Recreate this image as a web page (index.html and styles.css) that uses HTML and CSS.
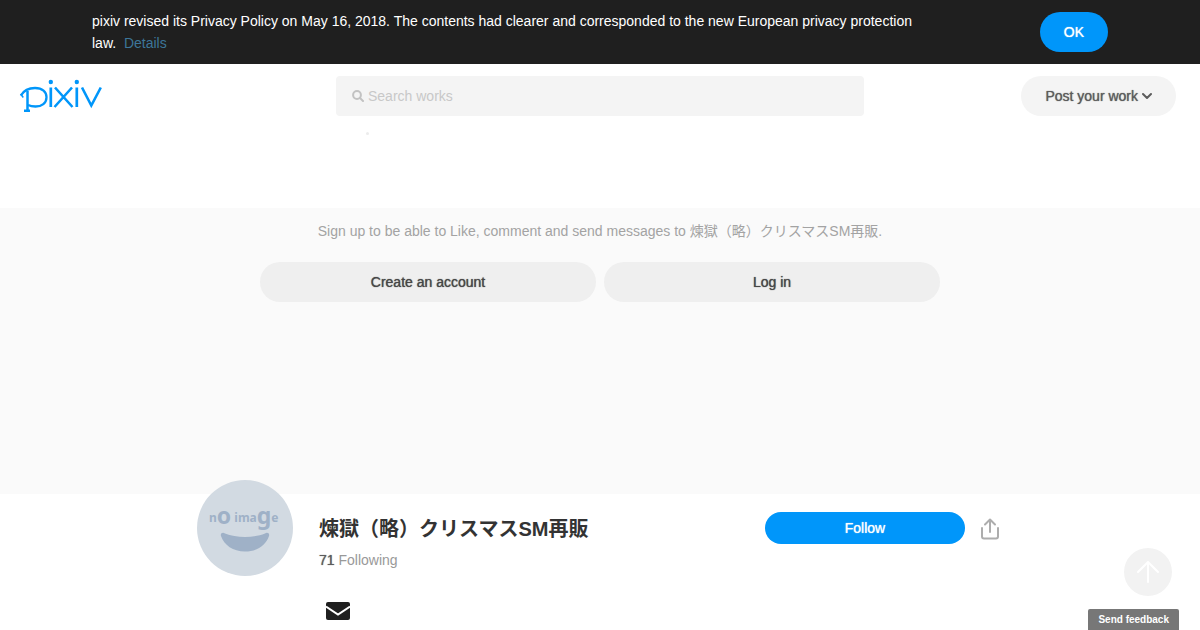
FILE: index.html
```html
<!DOCTYPE html>
<html lang="en">
<head>
<meta charset="utf-8">
<title>煉獄（略）クリスマスSM再販 - pixiv</title>
<meta name="viewport" content="width=device-width, initial-scale=1">
<link rel="stylesheet" href="styles.css">
</head>
<body>
<aside class="notice">
  <div class="notice-inner">
    <p class="notice-text">pixiv revised its Privacy Policy on May 16, 2018. The contents had clearer and corresponded to the new European privacy protection law.&nbsp; <a class="notice-link" href="#">Details</a></p>
    <button class="button button-primary" type="button">OK</button>
  </div>
</aside>

<header class="header">
  <a class="logo" href="#" aria-label="pixiv">
    <svg width="84" height="34" viewBox="0 0 84 34" fill="none" stroke="#0096fa">
      <path d="M.8 16.500C3.500 12 8.500 9 15 9c7.500 0 11.500 4 11.500 9.200 0 5.800-4.800 9.300-11 9.300-3 0-5.500-.5-7.500-1.500" stroke-width="2.300"/>
      <path d="M.7 15l2.600 3.500" stroke-width="1.500"/>
      <path d="M7.500 12v19.500M4 31.800h6" stroke-width="2.500"/>
      <path d="M30.800 8.500v19.500M56.800 8.500v19.500" stroke-width="2.700"/>
      <path d="M35 8.500l17.500 19.500M52 8.500l-17.500 19.500M62 8.500l9.300 18 9.500-18" stroke-width="2.600"/>
      <circle cx="30.800" cy="3" r="2.200" fill="#0096fa" stroke="none"/>
      <circle cx="56.800" cy="3" r="2.200" fill="#0096fa" stroke="none"/>
    </svg>
  </a>
  <form class="search">
    <svg width="12" height="12" viewBox="0 0 12 12" fill="none" stroke="#c2c2c2" stroke-width="2" stroke-linecap="round"><circle cx="5" cy="5" r="3.900"/><path d="M8 8l3 3"/></svg>
    <input class="search-input" type="text" placeholder="Search works" aria-label="Search works">
    <span class="search-dot"></span>
  </form>
  <div class="header-side">
    <button class="button button-post" type="button">Post your work
      <svg width="10" height="8" viewBox="0 0 10 8" fill="none" stroke="#5c5c5c" stroke-width="2" stroke-linecap="round" stroke-linejoin="round"><path d="M1 2l4 4 4-4"/></svg>
    </button>
  </div>
</header>

<main>
  <section class="signup">
    <p class="signup-text">Sign up to be able to Like, comment and send messages to 煉獄（略）クリスマスSM再販.</p>
    <div class="signup-actions">
      <button class="button button-soft" type="button">Create an account</button>
      <button class="button button-soft" type="button">Log in</button>
    </div>
  </section>

  <section class="profile">
    <svg class="avatar" width="96" height="96" viewBox="0 0 96 96" role="img" aria-label="no image">
      <circle cx="48" cy="48" r="48" fill="#d2dae2"/>
      <text class="avatar-text" x="12" y="42" fill="#9fb1c7">n<tspan class="avatar-large" dy="2">o</tspan><tspan dy="-2"> ima</tspan><tspan class="avatar-large" dy="2">g</tspan><tspan dy="-2">e</tspan></text>
      <path d="M24 56c-1-3 2-4 4-2.500 11 4.500 29 4.500 40 0 2-1.500 5-.5 4 2.500-3 9-12 15.500-24 15.500S27 65 24 56z" fill="#9fb1c7"/>
    </svg>
    <div class="profile-info">
      <h1 class="profile-name">煉獄（略）クリスマスSM再販</h1>
      <p class="following"><span class="following-count">71</span> Following</p>
      <a class="mail" href="#" aria-label="Email">
        <svg width="24" height="18" viewBox="0 0 24 18"><rect width="24" height="18" rx="2" fill="#1f1f1f"/><path d="M0 4.500l12 8 12-8" fill="none" stroke="#fff" stroke-width="2"/></svg>
      </a>
    </div>
    <div class="profile-actions">
      <button class="button button-primary button-follow" type="button">Follow</button>
      <button class="share" type="button" aria-label="Share">
        <svg width="20" height="22" viewBox="0 0 20 22" fill="none" stroke="#adadad" stroke-width="2"><path d="M2 10v8.500a2 2 0 0 0 2 2h12a2 2 0 0 0 2-2V10M10 14V2M5 6.500l5-5 5 5" stroke-linecap="round" stroke-linejoin="round"/></svg>
      </button>
    </div>
  </section>
</main>

<button class="to-top" type="button" aria-label="Back to top">
  <svg width="24" height="24" viewBox="0 0 24 24" fill="none" stroke="#fff" stroke-width="2" stroke-linecap="round" stroke-linejoin="round"><path d="M12 22V2M2 12L12 2l10 10"/></svg>
</button>
<button class="feedback" type="button">Send feedback</button>
</body>
</html>
```
FILE: styles.css
```css
* { box-sizing: border-box; }

body {
  margin: 0;
  background: #fff;
  color: #333;
  font: 14px/22px "Liberation Sans", "Noto Sans CJK JP", sans-serif;
}

p, h1 { margin: 0; }

svg { display: block; flex: none; }

button, input { font: inherit; }

.button {
  display: inline-flex;
  align-items: center;
  justify-content: center;
  gap: 4px;
  height: 40px;
  padding: 0 24px;
  border: 0;
  border-radius: 20px;
  text-shadow: 0 0 1px currentColor;
  cursor: pointer;
}

.button-primary { background: #0096fa; color: #fff; }
.button-post { background: #f4f4f4; color: #5c5c5c; }
.button-soft { flex: 1; background: #efefef; color: #474747; }

.notice { background: #1f1f1f; color: #fff; }

.notice-inner {
  display: flex;
  align-items: center;
  justify-content: space-between;
  gap: 64px;
  max-width: 1016px;
  min-height: 64px;
  margin: 0 auto;
}

.notice-text { max-width: 840px; }
.notice-link { color: #3d7699; text-decoration: none; }

.header {
  display: grid;
  grid-template-columns: 1fr minmax(0, 528px) 1fr;
  align-items: center;
  height: 64px;
  margin-bottom: 80px;
  padding: 0 24px;
}

.logo { justify-self: start; margin-left: -4px; }
.logo svg { overflow: visible; }

.search {
  position: relative;
  display: flex;
  align-items: center;
  gap: 4px;
  height: 40px;
  padding: 0 16px;
  border-radius: 4px;
  background: #f4f4f4;
}

.search-input {
  flex: 1;
  min-width: 0;
  padding: 0;
  border: 0;
  outline: 0;
  background: transparent;
}

.search-input::placeholder { color: #c8c8c8; }

.search-dot {
  position: absolute;
  top: 56px;
  left: 30px;
  width: 3px;
  height: 3px;
  border-radius: 50%;
  background: #ececec;
}

.header-side { justify-self: end; }

.signup {
  min-height: 286px;
  padding: 12px 16px;
  background: #fafafa;
  text-align: center;
}

.signup-text { margin-bottom: 20px; color: #a3a3a3; }

.signup-actions {
  display: flex;
  gap: 8px;
  max-width: 680px;
  margin: 0 auto;
}

.profile {
  display: flex;
  align-items: flex-start;
  max-width: 806px;
  margin: 0 auto;
  padding-right: 3px;
}

.avatar { margin-top: -14px; }
.avatar-text { font: bold 12px "Noto Sans", sans-serif; }
.avatar-large { font-size: 23px; }

.profile-info { flex: 1; padding: 19px 0 8px 26px; }
.profile-name { font-size: 20px; line-height: 32px; }
.following { margin-top: 4px; color: #999; }
.following-count { color: #5c5c5c; text-shadow: 0 0 1px currentColor; }
.mail { display: inline-block; margin: 31px 7px 0; }

.profile-actions {
  display: flex;
  align-items: center;
  gap: 15px;
  padding-top: 18px;
}

.button-follow { width: 200px; height: 32px; }

.share {
  padding: 2px 0 0;
  border: 0;
  background: none;
  cursor: pointer;
}

.to-top {
  position: fixed;
  right: 28px;
  bottom: 34px;
  display: grid;
  place-items: center;
  width: 48px;
  height: 48px;
  padding: 0;
  border: 0;
  border-radius: 50%;
  background: #f2f2f2;
}

.feedback {
  position: fixed;
  right: 21px;
  bottom: 0;
  padding: 0 10px;
  border: 0;
  border-radius: 2px 2px 0 0;
  background: #777;
  color: #fff;
  font-size: 10px;
  font-weight: bold;
  line-height: 21px;
}
```
